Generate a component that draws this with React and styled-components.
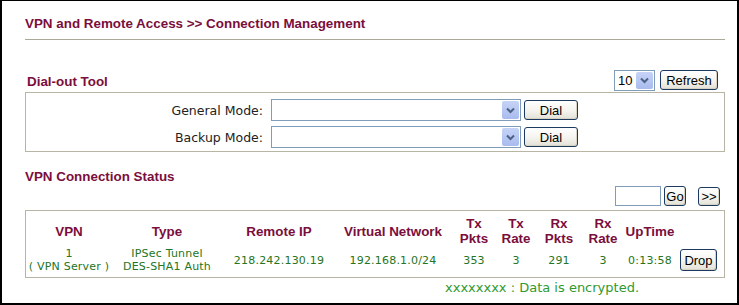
import React from 'react'
import styled, { createGlobalStyle } from 'styled-components'

const Global = createGlobalStyle`
  html, body {
    margin: 0;
    padding: 0;
    background: #fff;
  }
`

const Frame = styled.div`
  width: 739px;
  height: 305px;
  box-sizing: border-box;
  border: 2px solid #000;
  border-top-width: 1px;
  padding: 15px 0 0 23px;
  background: #fff;
  overflow: hidden;
`

const Content = styled.div`
  width: 700px;
`

const PageTitle = styled.div`
  font-family: 'Liberation Sans', Arial, sans-serif;
  font-weight: bold;
  font-size: 13.4px;
  line-height: 16px;
  color: #7a0e3c;
  padding-bottom: 7px;
  border-bottom: 1px solid #aca899;
`

const SectionBar = styled.div`
  display: flex;
  align-items: center;
  justify-content: space-between;
  height: 22px;
  margin-top: ${p => p.$top}px;
`

const SectionTitle = styled.div`
  font-family: 'Liberation Sans', Arial, sans-serif;
  font-weight: bold;
  font-size: 13.4px;
  line-height: 16px;
  color: #7a0e3c;
  margin-top: ${p => p.$shift || 0}px;
  padding-left: ${p => p.$indent || 0}px;
`

const Controls = styled.div`
  display: flex;
  align-items: center;
  gap: ${p => p.$gap || 2}px;
  padding-right: ${p => p.$right || 0}px;
`

const Panel = styled.div`
  border: 1px solid #b9b5a4;
  margin-top: ${p => p.$top || 0}px;
`

const DialBox = styled(Panel)`
  padding: 6px 0 3px;
  display: flex;
  flex-direction: column;
  gap: 5px;
`

const DialRow = styled.div`
  display: flex;
  align-items: center;
  height: 22px;
`

const Label = styled.div`
  width: 245px;
  text-align: right;
  font-family: 'DejaVu Sans', Verdana, sans-serif;
  font-size: 12.5px;
  color: #222;
  padding-right: 8px;
  box-sizing: border-box;
`

const SelectBox = styled.div`
  width: ${p => p.$w}px;
  height: ${p => p.$h || 22}px;
  box-sizing: border-box;
  border: 1px solid #7f9db9;
  background: #fff;
  display: flex;
  align-items: stretch;
  margin-right: 3px;
`

const SelectValue = styled.div`
  flex: 1;
  font-family: 'Liberation Sans', Arial, sans-serif;
  font-size: 13px;
  color: #000;
  display: flex;
  align-items: center;
  padding-left: 3px;
`

const Arrow = styled.div`
  width: 17px;
  margin: 1px;
  border-radius: 2px;
  background: linear-gradient(#c6d3f7, #b4c5f2 60%, #a9bbee);
  display: flex;
  align-items: center;
  justify-content: center;
`

const Button = styled.button`
  font-family: 'Liberation Sans', Arial, sans-serif;
  font-size: 13px;
  color: #000;
  width: ${p => p.$w}px;
  height: ${p => p.$h || 20}px;
  padding: 0;
  border: 1px solid #1c3a60;
  border-radius: 3px;
  background: linear-gradient(#ffffff, #f4f3ee 55%, #e3e1d6);
  box-shadow: inset -1px -1px 0 #d6d3c4;
  display: flex;
  align-items: center;
  justify-content: center;
  margin-left: ${p => p.$left || 0}px;
`

const TextInput = styled.div`
  width: 46px;
  height: 20px;
  box-sizing: border-box;
  border: 1px solid #7f9db9;
  background: #fff;
  margin-right: 1px;
`

const StatusBox = styled(Panel)`
  padding: 4px 0;
`

const Table = styled.table`
  border-collapse: collapse;
  table-layout: fixed;
  width: 698px;
`

const Head = styled.th`
  font-family: 'Liberation Sans', Arial, sans-serif;
  font-weight: bold;
  font-size: 13.4px;
  line-height: 15px;
  color: #7a0e3c;
  text-align: center;
  vertical-align: middle;
  padding: 0;
  height: 32px;
`

const Cell = styled.td`
  font-family: 'DejaVu Sans', Verdana, sans-serif;
  font-size: 11px;
  line-height: 13px;
  letter-spacing: 0.2px;
  color: #247524;
  text-align: ${p => p.$align || 'center'};
  vertical-align: middle;
  padding: 0;
  padding-left: ${p => p.$pad || 0}px;
  height: 24px;
`

const Note = styled.div`
  font-family: 'DejaVu Sans', Verdana, sans-serif;
  font-size: 13px;
  line-height: 16px;
  color: #2f9a2f;
  padding-left: 420px;
  margin-top: 2px;
`

const Chevron = () => (
  <svg width="9" height="7" viewBox="0 0 9 7">
    <path d="M1 1.5 L4.5 5 L8 1.5" fill="none" stroke="#4d6185" strokeWidth="2" />
  </svg>
)

const Select = ({ width, height, value }) => (
  <SelectBox $w={width} $h={height}>
    <SelectValue>{value}</SelectValue>
    <Arrow>
      <Chevron />
    </Arrow>
  </SelectBox>
)

const columns = [86, 110, 114, 114, 48, 36, 50, 38, 56, 46]

export default function App() {
  return (
    <Frame>
      <Global />
      <Content>
        <PageTitle>VPN and Remote Access &gt;&gt; Connection Management</PageTitle>

        <SectionBar $top={29}>
          <SectionTitle $shift={3} $indent={2}>Dial-out Tool</SectionTitle>
          <Controls $right={7} $gap={0}>
            <Select width={41} height={21} value="10" />
            <Button $w={58}>Refresh</Button>
          </Controls>
        </SectionBar>

        <DialBox $top={1}>
          <DialRow>
            <Label>General Mode:</Label>
            <Select width={250} />
            <Button $w={54}>Dial</Button>
          </DialRow>
          <DialRow>
            <Label>Backup Mode:</Label>
            <Select width={250} />
            <Button $w={54}>Dial</Button>
          </DialRow>
        </DialBox>

        <SectionTitle style={{ marginTop: 17 }}>VPN Connection Status</SectionTitle>
        <Controls $right={5} style={{ justifyContent: 'flex-end', marginTop: 1 }}>
          <TextInput />
          <Button $w={22}>Go</Button>
          <Button $w={22} $h={19} $left={10}>&gt;&gt;</Button>
        </Controls>

        <StatusBox $top={4}>
          <Table>
            <colgroup>
              {columns.map((w, i) => (
                <col key={i} style={{ width: w }} />
              ))}
            </colgroup>
            <thead>
              <tr>
                <Head>VPN</Head>
                <Head>Type</Head>
                <Head>Remote IP</Head>
                <Head>Virtual Network</Head>
                <Head>Tx<br />Pkts</Head>
                <Head>Tx<br />Rate</Head>
                <Head>Rx<br />Pkts</Head>
                <Head>Rx<br />Rate</Head>
                <Head>UpTime</Head>
                <Head />
              </tr>
            </thead>
            <tbody>
              <tr>
                <Cell>1<br />( VPN Server )</Cell>
                <Cell>IPSec Tunnel<br />DES-SHA1 Auth</Cell>
                <Cell>218.242.130.19</Cell>
                <Cell>192.168.1.0/24</Cell>
                <Cell>353</Cell>
                <Cell>3</Cell>
                <Cell>291</Cell>
                <Cell>3</Cell>
                <Cell>0:13:58</Cell>
                <Cell $align="left" $pad={2}>
                  <Button $w={37} $h={22}>Drop</Button>
                </Cell>
              </tr>
            </tbody>
          </Table>
        </StatusBox>

        <Note>xxxxxxxx : Data is encrypted.</Note>
      </Content>
    </Frame>
  )
}
